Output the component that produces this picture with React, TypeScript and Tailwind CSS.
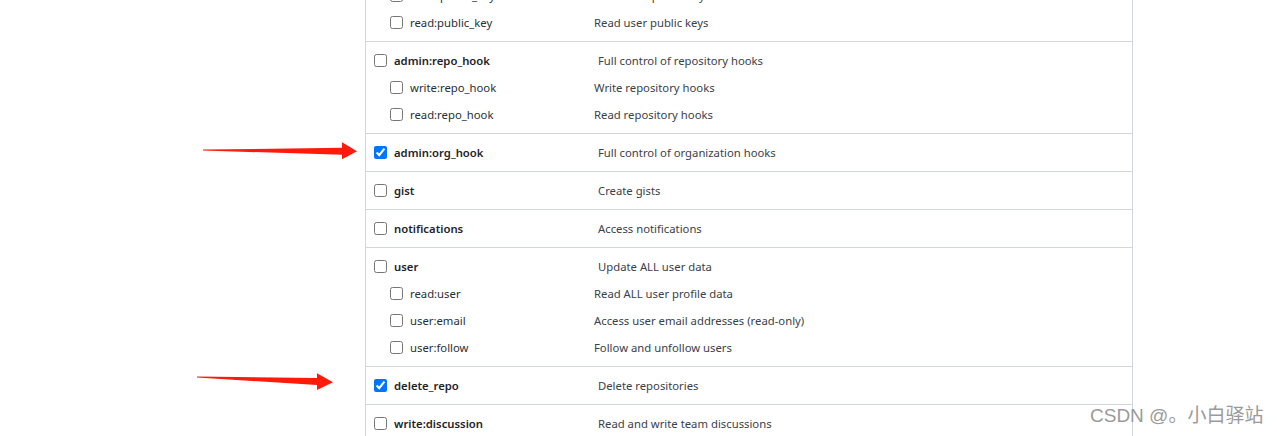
import React from "react";

type Scope = { name: string; desc: string; checked?: boolean };
type Group = { main: Scope; subs: Scope[] };

const groups: Group[] = [
  {
    main: { name: "admin:public_key", desc: "Full control of user public keys" },
    subs: [
      { name: "write:public_key", desc: "Write user public keys" },
      { name: "read:public_key", desc: "Read user public keys" },
    ],
  },
  {
    main: { name: "admin:repo_hook", desc: "Full control of repository hooks" },
    subs: [
      { name: "write:repo_hook", desc: "Write repository hooks" },
      { name: "read:repo_hook", desc: "Read repository hooks" },
    ],
  },
  { main: { name: "admin:org_hook", desc: "Full control of organization hooks", checked: true }, subs: [] },
  { main: { name: "gist", desc: "Create gists" }, subs: [] },
  { main: { name: "notifications", desc: "Access notifications" }, subs: [] },
  {
    main: { name: "user", desc: "Update ALL user data" },
    subs: [
      { name: "read:user", desc: "Read ALL user profile data" },
      { name: "user:email", desc: "Access user email addresses (read-only)" },
      { name: "user:follow", desc: "Follow and unfollow users" },
    ],
  },
  { main: { name: "delete_repo", desc: "Delete repositories", checked: true }, subs: [] },
  { main: { name: "write:discussion", desc: "Read and write team discussions" }, subs: [] },
];

function MainRow({ s }: { s: Scope }) {
  return (
    <div className="h-[27px] flex items-center pl-[8px]">
      <input type="checkbox" defaultChecked={s.checked} className="m-0 w-[13px] h-[13px] shrink-0" />
      <div className="ml-[7px] w-[204px] pt-[2px] font-semibold text-[#1f2328]">{s.name}</div>
      <div className="pt-[2px] text-[#3b4149]">{s.desc}</div>
    </div>
  );
}

function SubRow({ s }: { s: Scope }) {
  return (
    <div className="h-[27px] flex items-center pl-[24px]">
      <input type="checkbox" defaultChecked={s.checked} className="m-0 w-[13px] h-[13px] shrink-0" />
      <div className="ml-[7px] w-[184px] pt-[2px] text-[#2a2f36]">{s.name}</div>
      <div className="pt-[2px] text-[#3b4149]">{s.desc}</div>
    </div>
  );
}

export default function App() {
  return (
    <div
      className="relative w-[1277px] h-[436px] overflow-hidden bg-white text-[11.3px]"
      style={{ fontFamily: '"Noto Sans", "Open Sans", sans-serif' }}
    >
      <div className="ml-[365px] w-[768px] mt-[-50px] border-x border-[#d0d7de]">
        {groups.map((g) => (
          <div key={g.main.name} className="py-[5px] border-b border-[#d0d7de]">
            <MainRow s={g.main} />
            {g.subs.map((s) => (
              <SubRow key={s.name} s={s} />
            ))}
          </div>
        ))}
      </div>

      <svg className="absolute inset-0 pointer-events-none" width="1277" height="436" viewBox="0 0 1277 436">
        <polygon
          fill="#fe1b0c"
          points="203,149.6 342,147.7 342,142.3 357,151.3 342,159.3 342,154.7 203,150.6"
        />
        <polygon
          fill="#fe1b0c"
          points="197,376.5 317,378 317,373.3 333,382.3 317,390 317,385 197,377.5"
        />
      </svg>

      <div
        className="absolute left-[1090px] top-[403px] text-[19px] leading-[26px] text-[#9a9a9a] whitespace-nowrap"
        style={{ fontFamily: '"Liberation Sans", "Noto Sans CJK SC", sans-serif' }}
      >
        CSDN @。小白驿站
      </div>
    </div>
  );
}
